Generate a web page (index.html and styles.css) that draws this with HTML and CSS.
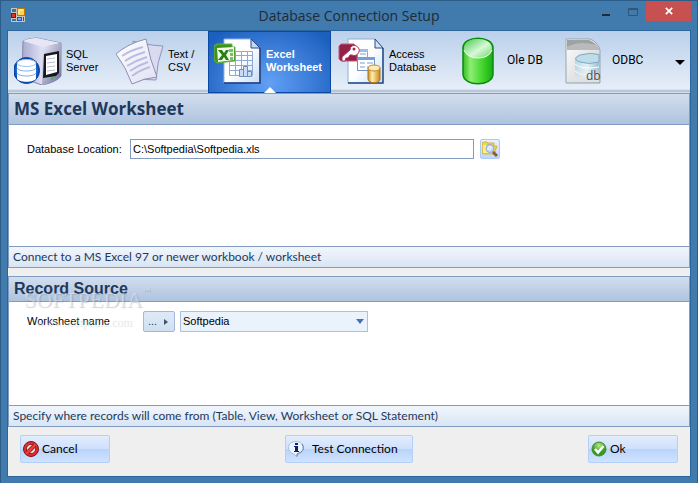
FILE: index.html
```html
<!DOCTYPE html>
<html lang="en">
<head>
<meta charset="utf-8">
<title>Database Connection Setup</title>
<link rel="stylesheet" href="styles.css">
</head>
<body>
<div class="window">
  <header class="titlebar">
    <svg class="app-icon" width="14" height="14" viewBox="0 0 14 14" aria-hidden="true">
      <rect width="14" height="14" fill="#c9c5b8"/>
      <path d="M1 1h4v3H1zM1 11h4v2H1z" fill="#3d72a5"/>
      <rect x="0" y="5" width="5" height="5" fill="#8e1008"/><rect x="1" y="6" width="3" height="3" fill="#df3524"/>
      <rect x="6" y="0" width="8" height="8" fill="#b67c05"/><rect x="7" y="1" width="6" height="6" fill="#ffd44c"/><path d="M7 1h5v2H9v3H7z" fill="#ffe996"/>
      <rect x="6" y="9" width="5" height="4" fill="#2457c5"/><path d="M7 10h3v2H7z" fill="#75a9fa"/><path d="M12 9h1v4h-1z" fill="#2457c5"/>
    </svg>
    <h1 class="window-title">Database Connection Setup</h1>
    <div class="window-controls">
      <button class="control" aria-label="Minimize"><svg width="10" height="14" viewBox="0 0 10 14"><path d="M1 10h8v2H1z" fill="#1f2b36"/></svg></button>
      <button class="control" aria-label="Maximize" disabled><svg width="10" height="14" viewBox="0 0 10 14"><path d="M.5 4.5h9v7h-9zM0 5.500h10" fill="none" stroke="#315573"/></svg></button>
      <button class="control close" aria-label="Close"><svg width="8" height="8" viewBox="0 0 8 8"><path d="M.8.8l6.400 6.400M7.200.8L.8 7.200" stroke="#fff" stroke-width="1.700"/></svg></button>
    </div>
  </header>

  <main class="content">
    <nav class="tabs" aria-label="Data source">
      <button class="tab tab-sql">
        <svg width="48" height="48" viewBox="0 0 48 48" aria-hidden="true">
          <defs>
            <linearGradient id="tower" x2="1"><stop stop-color="#a9aad0"/><stop offset=".5" stop-color="#dedff2"/><stop offset="1" stop-color="#7476a2"/></linearGradient>
            <linearGradient id="side" x2="1" y2="1"><stop stop-color="#eeeefa"/><stop offset="1" stop-color="#686b96"/></linearGradient>
            <radialGradient id="ball"><stop stop-color="#74c6ff"/><stop offset=".75" stop-color="#1974dd"/><stop offset="1" stop-color="#083d9c"/></radialGradient>
          </defs>
          <path d="M9 4Q14 1 23 1L47 6V39Q43 45 28 48L8 41z" fill="url(#tower)" stroke="#8586aa"/>
          <path d="M9 4L29 10L47 6L23 1Q14 1 9 4z" fill="#e6e6f5"/>
          <path d="M29 10L47 6V39Q41 45 28 48z" fill="url(#side)"/>
          <path d="M30 17l15-3v22l-3 3-13 2z" fill="#18191f"/>
          <path d="M32 19l11-2v18l-11 3z" fill="#fff"/>
          <path d="M33 22l8-1M33 26l8-1M33 30l8-1M33 34l8-1" stroke="#b9c0d3"/>
          <path d="M37 41l2-1v3h-2z" fill="#39bc3c"/>
          <circle cx="12.500" cy="33.500" r="13" fill="url(#ball)" stroke="#0c429d"/>
          <path d="M3 26v15c0 5 19 5 19 0V26z" fill="#fff"/>
          <ellipse cx="12.500" cy="26" rx="9.500" ry="3.500" fill="#fff" stroke="#9cc4ef"/>
          <path d="M3 31c1 4 18 4 19 0M3 36c1 4 18 4 19 0" fill="none" stroke="#7fb0e8"/>
        </svg>
        <span>SQL<br>Server</span>
      </button>
      <button class="tab tab-text">
        <svg width="48" height="48" viewBox="0 0 48 48" aria-hidden="true">
          <defs><linearGradient id="paper" x2="1" y2="1"><stop stop-color="#fff"/><stop offset="1" stop-color="#e0e0f3"/></linearGradient></defs>
          <path d="M17 4Q29 8 47 9Q41 25 40 43Q29 42 18 43z" fill="#d9daef" stroke="#9294b7"/>
          <path d="M0 17Q11 7 30 2Q34 23 41 40Q28 41 16 47Q10 30 0 17z" fill="url(#paper)" stroke="#8f90b1"/>
          <path d="M6 19Q15 13 27 10M9 24Q18 18 29 15M11 29Q21 23 31 20M14 34Q23 28 32 25M16 39Q24 33 34 30" fill="none" stroke="#bbbce1" stroke-width="2"/>
        </svg>
        <span>Text /<br>CSV</span>
      </button>
      <button class="tab tab-excel" aria-current="page">
        <svg width="48" height="48" viewBox="0 0 48 48" aria-hidden="true">
          <defs><linearGradient id="sheet" x2="1" y2="1"><stop stop-color="#fff"/><stop offset=".5" stop-color="#fff"/><stop offset="1" stop-color="#c6dcf5"/></linearGradient></defs>
          <path d="M10 2h27l9 9v35H10z" fill="url(#sheet)" stroke="#91b4e6"/><path d="M46 11v35H10" fill="none" stroke="#173574" stroke-width="1.500"/><path d="M37 2v9h9z" fill="#c2d7f2" stroke="#284b8b"/>
          <path d="M15.500 14.500h23v24h-23zM15 18.500h24M15 23.500h24M15 28.500h24M15 33.500h24M21.500 14v25M27.500 14v25M33.500 14v25" fill="none" stroke="#8caad8"/>
          <path d="M25.500 32.500h4v7h-4zM29.500 29.500h4v10h-4zM33.500 34.500h4v5h-4z" fill="#c9dcf4" stroke="#6a8dc7"/>
          <path d="M3 7h15v3h3v14l-18 2-3-3V9z" fill="#3c941c" stroke="#68b44f"/>
          <path d="M3 11l17-1v13L4 25z" fill="#f2fae9"/><path d="M4 13h4l2 3 2-3h3l-3 5 3 5h-3l-2-3-2 3H4l4-5z" fill="#288014"/>
          <path d="M15 12h4v3h-4zM16 16h3v3h-3zM16 20h3v3h-3z" fill="#81bc6a"/>
        </svg>
        <span>Excel<br>Worksheet</span>
      </button>
      <button class="tab tab-access">
        <svg width="48" height="48" viewBox="0 0 48 48" aria-hidden="true">
          <defs><linearGradient id="gold" x2="1"><stop stop-color="#c78822"/><stop offset=".35" stop-color="#fff0b0"/><stop offset="1" stop-color="#cb8617"/></linearGradient></defs>
          <path d="M11 2h27l8 9v35H11z" fill="url(#sheet)" stroke="#8fafd8"/><path d="M46 11v35H11" fill="none" stroke="#244a87" stroke-width="1.500"/><path d="M38 2v9h8z" fill="#d3e3f7" stroke="#284b8b"/>
          <path d="M20.500 12.500h10v8h-10z" fill="#fff" stroke="#87a9dd"/><path d="M20 12h11v3H20z" fill="#9dbdea"/>
          <path d="M20.500 20.500h17v13h-17z" fill="#fff" stroke="#6e92cd"/><path d="M20 20h18v3H20z" fill="#759fda"/><path d="M23 26h5m2 0h6m-13 4h5m2 0h5M23 17h6" stroke="#789dd5"/>
          <path d="M31 31v11c0 5 12 5 12 0V31z" fill="url(#gold)" stroke="#a7741e"/><ellipse cx="37" cy="31" rx="6" ry="3" fill="#ffeab0" stroke="#c18a31"/>
          <path d="M4 7h13l3 3v14H4l-2-2V9z" fill="#942047" stroke="#bd5875"/>
          <path d="M15 9a5 5 0 1 1 0 9h-2l-2 3H9l-1 3H5v-4l8-7q0-3 2-4z" fill="#fff" stroke="#a6365b"/><circle cx="17" cy="12" r="1.500" fill="#9e2c50"/>
        </svg>
        <span>Access<br>Database</span>
      </button>
      <button class="tab tab-ole">
        <svg width="48" height="48" viewBox="0 0 48 48" aria-hidden="true">
          <defs><linearGradient id="green" x2="1"><stop stop-color="#37bc23"/><stop offset=".25" stop-color="#8dee72"/><stop offset=".65" stop-color="#43d52e"/><stop offset="1" stop-color="#16ae10"/></linearGradient><linearGradient id="green-top" x2="1" y2="1"><stop stop-color="#48c84a"/><stop offset=".55" stop-color="#d8f8d9"/><stop offset="1" stop-color="#64d95f"/></linearGradient></defs>
          <path d="M8 11C8-2 38-2 38 11V37C38 50 8 50 8 37z" fill="url(#green)" stroke="#078c0b" stroke-width="1.500"/>
          <path d="M9 11C10-1 36-1 37 11Q36 21 23 21Q10 21 9 11z" fill="url(#green-top)"/><path d="M9 13Q12 21 23 21Q34 21 37 13" fill="none" stroke="#eaffea"/>
        </svg>
        <span>Ole DB</span>
      </button>
      <button class="tab tab-odbc">
        <svg width="48" height="48" viewBox="0 0 48 48" aria-hidden="true">
          <defs><linearGradient id="file" x2="1" y2="1"><stop stop-color="#fff"/><stop offset="1" stop-color="#c9cbcf"/></linearGradient><linearGradient id="disk" x2="1"><stop stop-color="#b9d6e4"/><stop offset=".5" stop-color="#e4f1f6"/><stop offset="1" stop-color="#9abfd3"/></linearGradient><linearGradient id="fade" x2="0" y2="1"><stop offset=".35" stop-color="#eceeef" stop-opacity="0"/><stop offset="1" stop-color="#dfe1e3"/></linearGradient></defs>
          <path d="M6 2h24q8 3 10 11v33H6z" fill="url(#file)" stroke="#98a3b0"/>
          <path d="M7 3h22q8 3 10 10H7z" fill="#9fa2a3"/><path d="M7 10Q20 3 36 8l3 5H7z" fill="#b8babb"/>
          <path d="M15 21v18q7 4 24 2V18z" fill="url(#disk)"/><path d="M15 27q6 6 24 3M15 34q6 6 24 3" fill="none" stroke="#fff"/>
          <path d="M39 17.500Q30 15 20 18Q11 22 20 25Q29 28 39 25z" fill="#c0dce9" stroke="#79aac5"/>
          <path d="M14 22h25v23H14z" fill="url(#fade)"/>
          <text x="26" y="43" class="file-label">db</text>
        </svg>
        <span>ODBC</span>
      </button>
      <button class="more" aria-label="More data sources"><svg width="10" height="5" viewBox="0 0 10 5"><path d="M0 0h10L5 5z"/></svg></button>
    </nav>

    <section class="panel">
      <h2 class="panel-title humanist">MS Excel Worksheet</h2>
      <div class="panel-body location">
        <label for="location">Database Location:</label>
        <input id="location" type="text" value="C:\Softpedia\Softpedia.xls">
        <button class="browse" aria-label="Browse for database">
          <svg width="16" height="16" viewBox="0 0 16 16"><path d="M0 2l2-1h3l1 1h6v3h3l-3 8H1L0 12z" fill="#ecd44e" stroke="#d3b53c"/><path d="M1 4h10v8H1z" fill="#fff083"/><circle cx="8" cy="7.500" r="4" fill="#c3d8fa" stroke="#8fa6da"/><path d="M6 6h4M5 8h4" stroke="#fff"/><path d="M11 11l4 4" stroke="#8a5847" stroke-width="3"/></svg>
        </button>
      </div>
      <p class="hint">Connect to a MS Excel 97 or newer workbook / worksheet</p>
    </section>

    <section class="panel record">
      <h2 class="panel-title">Record Source</h2>
      <div class="panel-body source">
        <label for="worksheet">Worksheet name</label>
        <button class="refresh" aria-label="Worksheet options"><span>...</span><svg width="4" height="6" viewBox="0 0 4 6"><path d="M0 0l4 3-4 3z" fill="#43536a"/></svg></button>
        <div class="select-wrap"><select id="worksheet"><option>Softpedia</option></select><svg class="select-arrow" width="8" height="5" viewBox="0 0 8 5"><path d="M0 0h8L4 5z" fill="#4672b5"/></svg></div>
      </div>
      <p class="hint">Specify where records will come from (Table, View, Worksheet or SQL Statement)</p>
      <div class="watermark" aria-hidden="true">SOFTPEDIA<sup>™</sup><small>www.softpedia.com</small></div>
    </section>

    <footer class="actions">
      <button class="action">
        <svg width="16" height="16" viewBox="0 0 16 16" aria-hidden="true"><circle cx="8" cy="8" r="7.500" fill="#e52d2d" stroke="#7b1313"/><circle cx="8" cy="8" r="4.700" fill="#f6dddd" stroke="#891d1d"/><path d="M4 12l8-8" stroke="#8d1515" stroke-width="4"/><path d="M3.500 12.500l9-9" stroke="#ec3f3c" stroke-width="2.500"/></svg>Cancel
      </button>
      <button class="action test">
        <svg width="16" height="16" viewBox="0 0 16 16" aria-hidden="true"><path d="M8 .5C3.500.5.5 3 .5 6.500S3 12 5.500 13L9 15.500 10.500 13Q15.500 11 15.500 6.500C15.500 3 12.500.5 8 .5z" fill="#eaf4ff" stroke="#a5bddb"/><path d="M14 3q3 5-1 8l-4 2v2.500" fill="none" stroke="#5f7ea7"/><path d="M7 2h3v2H7zM6 5h4v5h1v1H6v-1h1V6H6z" fill="#10206c"/></svg>Test Connection
      </button>
      <button class="action ok">
        <svg width="16" height="16" viewBox="0 0 16 16" aria-hidden="true"><defs><radialGradient id="ok-ball" cy=".25"><stop stop-color="#b4ea85"/><stop offset="1" stop-color="#339b21"/></radialGradient></defs><circle cx="8" cy="8" r="7" fill="url(#ok-ball)" stroke="#438a35"/><path d="M4 8l3 3.500L12.500 5" fill="none" stroke="#fff" stroke-width="2.500"/></svg>Ok
      </button>
    </footer>
  </main>
</div>
</body>
</html>
```
FILE: styles.css
```css
* { box-sizing: border-box; }
body { margin: 0; font: 11px/13px "Liberation Sans", Arial, sans-serif; color: #000; }
button, input, select { font: inherit; color: inherit; margin: 0; }
button { padding: 0; border: 0; background: none; }
h1, h2, p { margin: 0; }

.window { min-height: 100vh; display: flex; flex-direction: column; padding: 0 7px 7px; border: 1px solid #2c5c88; background: #417aad; }
.titlebar { position: relative; flex: 0 0 30px; display: flex; align-items: center; justify-content: center; }
.app-icon { position: absolute; left: 3px; top: 7px; }
.window-title { font: 14px/20px "Open Sans", "Noto Sans", sans-serif; color: #1f2b36; }
.window-controls { position: absolute; right: -1px; top: 0; display: flex; }
.control { width: 27px; height: 20px; display: flex; align-items: center; justify-content: center; }
.control.close { width: 45px; background: #c75050; }

.content { flex: 1; display: flex; flex-direction: column; background: #efefef; outline: 1px solid #2c659c; }
.tabs { flex: 0 0 62px; display: flex; background: linear-gradient(#bad0eb, #e6eef8 58px, #abbbd1 60px, #e1e8f1); }
.tab { display: flex; align-items: center; gap: 4px; padding: 0 0 3px 6px; text-align: left; white-space: nowrap; }
.tab svg { flex: none; }
.tab-sql { width: 102px; }
.tab-text { width: 98px; }
.tab-excel { position: relative; width: 123px; color: #fff; font-weight: bold; border: 1px solid #0a4aa5; padding: 0 0 3px 5px; background: radial-gradient(ellipse at 50% 85%, #62a0f5, #1c60bf 90%); }
.tab-excel::after { content: ""; position: absolute; left: 55px; bottom: -1px; border: 6px solid transparent; border-top: 0; border-bottom-color: #fff; }
.tab-access { width: 118px; }
.tab-ole { width: 105px; }
.tab-ole, .tab-odbc { font: 12px/13px Roboto, "Liberation Sans", sans-serif; }
.more { margin-left: auto; width: 20px; display: flex; align-items: center; justify-content: center; }
.file-label { font: 12px "Open Sans", sans-serif; fill: #4b4e52; }

.panel { position: relative; display: flex; flex-direction: column; border: 1px solid #829bc0; background: #fff; flex: 1 0 auto; }
.record { margin-top: 8px; }
.panel-title { padding: 0 5px; font: bold 16px/24px "Liberation Sans", Arial, sans-serif; color: #1e395b; background: linear-gradient(#d1deee, #afc3df); border-bottom: 1px solid #829bc0; }
.panel-title.humanist { font: bold 17px/30px "Open Sans", "Noto Sans", sans-serif; }
.panel-body { flex: 1; display: flex; align-items: flex-start; padding: 0 18px; }
.panel-body label { line-height: 20px; }
.location { padding-top: 14px; min-height: 121px; }
.location label { flex: 0 0 103px; }
.location input { flex: 0 1 344px; min-width: 0; height: 20px; padding: 0 2px; border: 1px solid #829bc0; background: #fff; }
.browse { width: 20px; height: 20px; margin-left: 6px; display: flex; align-items: center; justify-content: center; border: 1px solid #a9caf7; border-radius: 2px; background: linear-gradient(#e9f1fc, #bdd6fb); }
.source { padding-top: 9px; min-height: 103px; }
.source label { flex: 0 0 116px; }
.refresh { width: 32px; height: 21px; display: flex; align-items: center; justify-content: space-between; padding: 0 6px 0 4px; border: 1px solid #a5b7d4; border-radius: 2px; background: linear-gradient(#dfeaf7, #cfdff1); color: #1e395b; }
.select-wrap { position: relative; flex: 0 1 188px; margin-left: 5px; }
.select-wrap select { appearance: none; display: block; width: 100%; height: 21px; padding: 0 2px; border: 1px solid #abc1de; border-radius: 0; background: #eaf2fb; }
.select-arrow { position: absolute; right: 4px; top: 8px; pointer-events: none; }
.hint { padding: 0 4px; border-top: 1px solid #829bc0; font: 12px/20px Lato, "Open Sans", sans-serif; color: #1e395b; background: linear-gradient(#f1f6fc, #d9e5f4); }

.watermark { position: absolute; left: 15px; top: 10px; font: 22px/26px "Liberation Serif", serif; color: rgba(255,255,255,.4); text-shadow: 1px 1px 1px rgba(90,100,120,.3); pointer-events: none; }
.watermark sup { font-size: 8px; line-height: 8px; vertical-align: top; }
.watermark small { display: block; padding-left: 12px; font-size: 12px; line-height: 18px; text-shadow: 1px 1px 1px rgba(90,100,120,.2); }

.actions { flex: 0 0 49px; display: flex; justify-content: space-between; align-items: flex-start; padding: 8px 12px; }
.action { width: 90px; height: 28px; display: flex; align-items: center; gap: 3px; padding: 0 2px; border: 1px solid #b3d0f8; border-radius: 2px; background: linear-gradient(#e2edfc, #cfe1fc 48%, #b8d3fb 50%, #d0e3ff); font: 12px/16px Lato, "Open Sans", sans-serif; }
.action.test { width: 128px; gap: 8px; }
```
